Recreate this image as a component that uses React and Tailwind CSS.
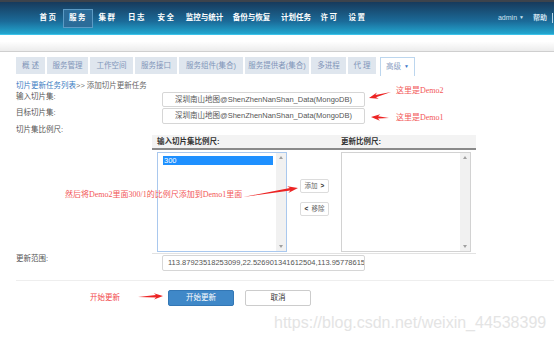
import React from 'react';

const navItems = [
  { label: '首页', w: 'w-[29px]' },
  { label: '服务', w: 'w-[30px]', active: true },
  { label: '集群', w: 'w-[29px]' },
  { label: '日志', w: 'w-[30px]' },
  { label: '安全', w: 'w-[29px]' },
  { label: '监控与统计', w: 'w-[47px]' },
  { label: '备份与恢复', w: 'w-[47px]' },
  { label: '计划任务', w: 'w-[42px]' },
  { label: '许可', w: 'w-[25px]' },
  { label: '设置', w: 'w-[31px]' },
];

const tabs = [
  { label: '概 述', w: 'w-[29px]' },
  { label: '服务管理', w: 'w-[41px]' },
  { label: '工作空间', w: 'w-[43px]' },
  { label: '服务接口', w: 'w-[42px]' },
  { label: '服务组件(集合)', w: 'w-[64px]' },
  { label: '服务提供者(集合)', w: 'w-[64px]' },
  { label: '多进程', w: 'w-[35px]' },
  { label: '代 理', w: 'w-[28px]' },
];

// red annotation arrow: thin tail that widens into a swept-back head
function arrowPoints(tx, ty, hx, hy, hl = 7, bw = 1.3, hw = 3.6) {
  const dx = hx - tx, dy = hy - ty;
  const L = Math.hypot(dx, dy);
  const ux = dx / L, uy = dy / L;
  const nx = -uy, ny = ux;
  const p = (a, b) => `${hx - ux * a + nx * b},${hy - uy * a + ny * b}`;
  return [`${tx},${ty}`, p(hl, bw), p(hl * 1.3, hw), `${hx},${hy}`, p(hl * 1.3, -hw), p(hl, -bw)].join(' ');
}

function Listbox({ focused, children }) {
  return (
    <div className={`w-[130px] h-[100px] border bg-white flex ${focused ? 'border-[#a9c8ee]' : 'border-[#d2d2d2]'}`}>
      <div className="flex-1 pl-[5px] pr-[3px] pt-[3px]">{children}</div>
      <div className="w-[10px] bg-[#f1f1f1] flex flex-col justify-between items-center py-[3px]">
        <svg width="4" height="3" viewBox="0 0 4 3"><path d="M0 3 L2 0 L4 3 Z" fill="#a0a0a0" /></svg>
        <svg width="4" height="3" viewBox="0 0 4 3"><path d="M0 0 L2 3 L4 0 Z" fill="#a0a0a0" /></svg>
      </div>
    </div>
  );
}

export default function App() {
  return (
    <div className="relative w-[554px] h-[343px] overflow-hidden bg-white font-['Liberation_Sans','Noto_Sans_CJK_SC',sans-serif] text-[7.5px] text-[#555]">
      {/* Top navigation */}
      <div className="h-[35px] border-t-2 border-[#3d434c] border-b border-b-[#3cc2e8] bg-[linear-gradient(#173a5c,#1b6a98_60%,#22a7d0)] flex items-center">
        <div className="flex items-center pl-[34px] flex-1">
          {navItems.map((n) =>
            n.active ? (
              <div key={n.label} className={`${n.w} h-[19px] flex items-center justify-center bg-[#2c6c99] border border-[#5c9ac4] text-white font-bold tracking-[1.5px]`}>
                {n.label}
              </div>
            ) : (
              <div key={n.label} className={`${n.w} flex items-center justify-center text-white font-bold ${n.label.length === 2 ? 'tracking-[1.5px]' : ''}`}>
                {n.label}
              </div>
            )
          )}
        </div>
        <div className="flex items-center pr-[1px] text-[#cfe2ef] text-[7px]">
          <span>admin</span>
          <span className="ml-[2px] text-[5px]">▼</span>
          <span className="ml-[9px] font-bold">帮助</span>
          <span className="ml-[5px] w-px h-[10px] bg-[#b8d8ea]"></span>
        </div>
      </div>

      {/* Sub bar */}
      <div className="h-[17px] bg-[linear-gradient(#ffffff,#ffffff_40%,#ececec)] border-b border-[#cfcfcf]"></div>

      {/* Tabs */}
      <div className="mt-[5px] pl-[16px] flex items-start gap-[2px] h-[18px]">
        {tabs.map((t) => (
          <div key={t.label} className={`${t.w} h-[17px] bg-[#dfe6ee] text-[#7f95b9] flex items-center justify-center`}>
            {t.label}
          </div>
        ))}
        <div className="ml-[2px] w-[35px] h-[19px] bg-white border border-[#bcd6ee] border-b-0 text-[#8aa0c2] flex items-center justify-center gap-[3px]">
          <span>高级</span>
          <span className="text-[5px] text-[#3b78c9]">▼</span>
        </div>
      </div>

      {/* Breadcrumb */}
      <div className="mt-[5px] pl-[16px] h-[12px] leading-[12px]">
        <span className="text-[#3a7cc2]">切片更新任务列表</span>
        <span className="text-[#777]">&gt;&gt; </span>
        <span className="text-[#666]">添加切片更新任务</span>
      </div>

      {/* Form */}
      <div className="pl-[16px]">
        <div className="flex h-[16px]">
          <div className="w-[146px] leading-[10px]">输入切片集:</div>
          <div className="w-[203px] h-[15px] border border-[#d6d6d6] rounded-[2px] flex items-center justify-center text-[#555]">
            深圳南山地图@ShenZhenNanShan_Data(MongoDB)
          </div>
        </div>
        <div className="flex h-[16px]">
          <div className="w-[146px] leading-[10px]">目标切片集:</div>
          <div className="w-[203px] h-[16px] border border-[#d6d6d6] rounded-[2px] flex items-center justify-center text-[#555]">
            深圳南山地图@ShenZhenNanShan_Data(MongoDB)
          </div>
        </div>
        <div className="h-[11px] leading-[11px]">切片集比例尺:</div>

        {/* Scale panel */}
        <div className="ml-[136px] w-[324px] border-b border-[#e2e2e2] pb-[1px]">
          <div className="h-[15px] bg-[#f3f3f3] border-b-2 border-[#8a8a8a] flex items-center pl-[5px] font-bold text-[#333]">
            <span className="w-[184px]">输入切片集比例尺:</span>
            <span>更新比例尺:</span>
          </div>
          <div className="flex pl-[5px] pt-[2px]">
            <Listbox focused>
              <div className="h-[9px] w-[110px] bg-[#1e90ff] text-white leading-[9px] pl-[1px]">300</div>
            </Listbox>
            <div className="w-[54px] pl-[13px] pt-[27px] flex flex-col gap-[9px]">
              <div className="w-[29px] h-[14px] border border-[#dcdcdc] rounded-[2px] bg-white flex items-center justify-center gap-[3px] text-[6.5px] text-[#666]">
                <span>添加</span>
                <span className="font-bold text-[#333]">&gt;</span>
              </div>
              <div className="w-[29px] h-[14px] border border-[#dcdcdc] rounded-[2px] bg-white flex items-center justify-center gap-[3px] text-[6.5px] text-[#666]">
                <span className="font-bold text-[#333]">&lt;</span>
                <span>移除</span>
              </div>
            </div>
            <Listbox />
          </div>
        </div>

        <div className="flex h-[16px] mt-[1px]">
          <div className="w-[146px] leading-[8px]">更新范围:</div>
          <div className="w-[203px] h-[16px] border border-[#d6d6d6] rounded-[2px] flex items-center pl-[5px] overflow-hidden whitespace-nowrap text-[#555]">
            113.87923518253099,22.526901341612504,113.95778615315956,22.583563612914623
          </div>
        </div>

        <div className="mt-[9px] border-t border-[#eeeeee]"></div>

        <div className="mt-[9px] ml-[152px] flex gap-[11px]">
          <div className="w-[66px] h-[16px] rounded-[2px] bg-[#3f88c8] border border-[#3377b5] text-white flex items-center justify-center">开始更新</div>
          <div className="w-[66px] h-[16px] rounded-[2px] bg-white border border-[#cccccc] text-[#333] flex items-center justify-center">取消</div>
        </div>
      </div>

      {/* Annotations */}
      <div className="absolute left-[396px] top-[86px] text-[8px] leading-[10px] text-[#f25757] font-['Liberation_Serif','Noto_Sans_CJK_SC',serif]">这里是Demo2</div>
      <div className="absolute left-[396px] top-[113px] text-[8px] leading-[10px] text-[#f25757] font-['Liberation_Serif','Noto_Sans_CJK_SC',serif]">这里是Demo1</div>
      <div className="absolute left-[65px] top-[190px] text-[8px] leading-[10px] text-[#f25757] font-['Liberation_Serif','Noto_Sans_CJK_SC',serif] whitespace-nowrap">然后将Demo2里面300/1的比例尺添加到Demo1里面</div>
      <div className="absolute left-[90px] top-[293px] text-[7.5px] leading-[10px] text-[#f24a4a]">开始更新</div>
      <svg className="absolute left-0 top-0 pointer-events-none" width="554" height="343">
        <polygon points={arrowPoints(391, 92, 369, 98, 7, 1.2, 3.2)} fill="#ec2424" />
        <polygon points={arrowPoints(389, 118, 371, 117, 7, 1.2, 3.2)} fill="#ec2424" />
        <polygon points={arrowPoints(243, 197, 298, 188, 8, 1.3, 3.4)} fill="#ec2424" />
        <polygon points={arrowPoints(138, 297, 163, 296, 7, 1.2, 3.2)} fill="#ec2424" />
      </svg>

      {/* Watermark */}
      <div className="absolute left-[274px] top-[312px] text-[16px] leading-[22px] text-[#e4e4e4] font-['Liberation_Sans',sans-serif] whitespace-nowrap">https://blog.csdn.net/weixin_44538399</div>
    </div>
  );
}
